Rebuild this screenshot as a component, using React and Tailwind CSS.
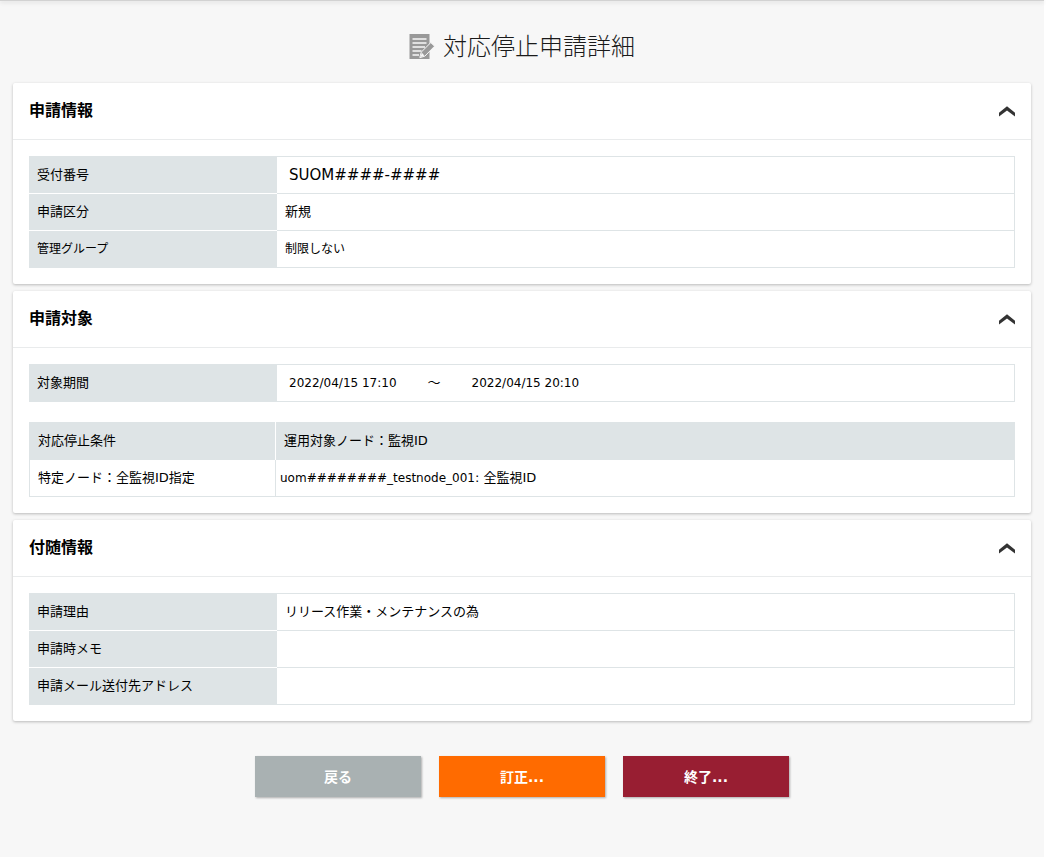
import React, { useState } from "react";

const ChevronUp = ({ open }) => (
    <svg width="16" height="12" viewBox="0 0 16 12" className={open ? "" : "rotate-180"}>
        <path d="M0 7.8L8 1.2L16 7.8V11.6L8 5.4L0 11.6Z" fill="#333333" />
    </svg>
);

const DocumentIcon = () => (
    <svg width="26" height="26" viewBox="0 0 26 26" fill="none">
        <path d="M0.5 0H20.5V25H0.5Z" fill="#999999" />
        <path d="M3.5 5H17.5M3.5 9H17.5M3.5 13H16M3.5 17H12.5M3.5 21H10" stroke="#f7f7f7" strokeWidth="1.5" />
        <path d="M10.8 23.6L12.2 18.2L21.8 8.6L25.6 12.2L15.8 22.2Z" fill="#999999" stroke="#f7f7f7" strokeWidth="1" />
        <path d="M12.8 18.8L15.4 21.6L11.4 23.2Z" fill="#f7f7f7" />
    </svg>
);

const Panel = ({ title, children }) => {
    const [open, setOpen] = useState(true);

    return (
        <section className="bg-white rounded-xs shadow-[0_1px_3px_rgba(0,0,0,0.25)]">
            <div className="flex items-center justify-between h-[57px] px-4 border-b border-[#e9ebec]">
                <h2 className="text-base font-bold leading-6">{title}</h2>
                <button type="button" aria-label={title} aria-expanded={open} className="cursor-pointer" onClick={() => setOpen(!open)}>
                    <ChevronUp open={open} />
                </button>
            </div>
            {open && <div className="flex flex-col gap-5 p-4">{children}</div>}
        </section>
    );
};

const DetailTable = ({ children }) => (
    <table className="w-full table-fixed border-separate border-spacing-0 border-t border-[#dee4e6] text-[13px] leading-5">
        <tbody>{children}</tbody>
    </table>
);

const Row = ({ label, small, last, children }) => (
    <tr className={small ? "text-xs" : ""}>
        <th scope="row" className={`w-[248px] h-[37px] px-2 bg-[#dee4e6] border-b text-left font-normal ${last ? "border-[#dee4e6]" : "border-white"}`}>
            {label}
        </th>
        <td className="h-[37px] px-2 border-r border-b border-[#dee4e6]">{children}</td>
    </tr>
);

const App = () => {
    return (
        <div className="bg-white pr-[2px] text-black font-['DejaVu_Sans','Noto_Sans_CJK_JP',sans-serif]">
            <div className="min-h-screen bg-[#f7f7f7]">
                <div className="h-px bg-[#d2d2d2] shadow-[0_1px_4px_rgba(0,0,0,0.25)]"></div>
                <main className="px-[13px] pb-10">
                    <div className="flex items-center justify-center gap-2 h-[82px] pb-[10px] pt-5">
                        <DocumentIcon />
                        <h1 className="text-2xl font-light text-[#1a1a1a]">対応停止申請詳細</h1>
                    </div>

                    <div className="flex flex-col gap-[7px]">
                        <Panel title="申請情報">
                            <DetailTable>
                                <Row label="受付番号">
                                    <span className="px-1 text-[15px]">SUOM####-####</span>
                                </Row>
                                <Row label="申請区分">新規</Row>
                                <Row label="管理グループ" small last>制限しない</Row>
                            </DetailTable>
                        </Panel>

                        <Panel title="申請対象">
                            <DetailTable>
                                <Row label="対象期間" last>
                                    <div className="flex items-center gap-[31px] px-1 text-xs">
                                        <span>2022/04/15 17:10</span>
                                        <span className="text-[13px]">～</span>
                                        <span>2022/04/15 20:10</span>
                                    </div>
                                </Row>
                            </DetailTable>

                            <table className="w-full table-fixed border-separate border-spacing-0 border-l border-r border-[#dee4e6] text-[13px] leading-5">
                                <thead>
                                    <tr className="bg-[#dee4e6] text-left">
                                        <th scope="col" className="w-[246px] h-[38px] px-2 border-r border-white font-normal">対応停止条件</th>
                                        <th scope="col" className="h-[38px] px-2 font-normal">運用対象ノード：監視ID</th>
                                    </tr>
                                </thead>
                                <tbody>
                                    <tr>
                                        <td className="h-[37px] px-2 border-r border-b border-[#dee4e6]">特定ノード：全監視ID指定</td>
                                        <td className="h-[37px] px-1 border-b border-[#dee4e6]">
                                            <span className="text-xs">uom########_testnode_001</span>: 全監視ID
                                        </td>
                                    </tr>
                                </tbody>
                            </table>
                        </Panel>

                        <Panel title="付随情報">
                            <DetailTable>
                                <Row label="申請理由">リリース作業・メンテナンスの為</Row>
                                <Row label="申請時メモ"></Row>
                                <Row label="申請メール送付先アドレス" last></Row>
                            </DetailTable>
                        </Panel>
                    </div>

                    <div className="flex justify-center gap-[18px] mt-[35px] text-sm font-bold text-white">
                        <button type="button" className="w-[166px] h-[41px] bg-[#a9b1b2] shadow-[1px_1px_2px_rgba(0,0,0,0.3)] cursor-pointer">戻る</button>
                        <button type="button" className="w-[166px] h-[41px] bg-[#ff6b00] shadow-[1px_1px_2px_rgba(0,0,0,0.3)] cursor-pointer">訂正...</button>
                        <button type="button" className="w-[166px] h-[41px] bg-[#981e32] shadow-[1px_1px_2px_rgba(0,0,0,0.3)] cursor-pointer">終了...</button>
                    </div>
                </main>
            </div>
        </div>
    );
};

export default App;
